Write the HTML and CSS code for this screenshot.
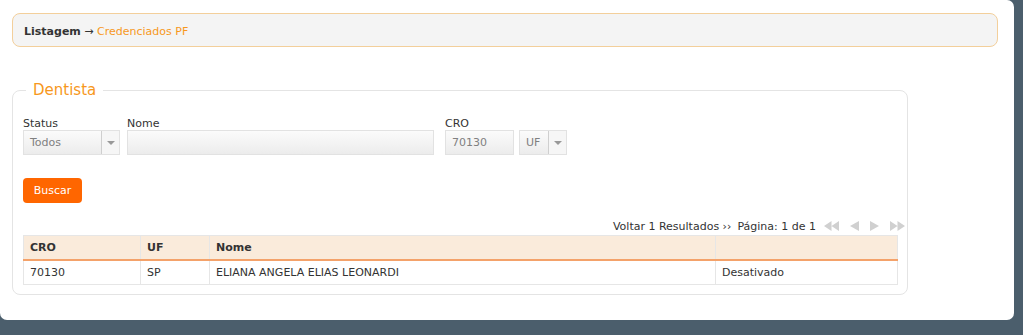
FILE: index.html
```html
<!DOCTYPE html>
<html>
<head>
    <title>Credenciados PF</title>
    <link rel="stylesheet" href="styles.css">
</head>
<body>
    <div class="panel">
        <div class="breadcrumb">
            <strong>Listagem</strong> &rarr; <span class="crumb-current">Credenciados PF</span>
        </div>

        <fieldset class="search-box">
            <legend>Dentista</legend>

            <div class="form-row">
                <div class="field field-status">
                    <label for="status">Status</label>
                    <div class="fake-select">
                        <span class="fake-select-value">Todos</span>
                        <span class="fake-select-arrow"></span>
                    </div>
                </div>
                <div class="field field-nome">
                    <label for="nome">Nome</label>
                    <input type="text" id="nome" class="text-input">
                </div>
                <div class="field field-cro">
                    <label for="cro">CRO</label>
                    <input type="text" id="cro" class="text-input" value="70130">
                </div>
                <div class="field field-uf">
                    <label>&nbsp;</label>
                    <div class="fake-select">
                        <span class="fake-select-value">UF</span>
                        <span class="fake-select-arrow"></span>
                    </div>
                </div>
            </div>

            <button type="button" class="btn-buscar">Buscar</button>

            <div class="pager">
                <span>Voltar 1 Resultados &rsaquo;&rsaquo;</span>
                <span class="pager-page">Página: 1 de 1</span>
                <span class="pager-icons">
                    <svg width="15" height="10" viewBox="0 0 15 10"><path d="M7.5 0 L0 5 L7.5 10 Z M15 0 L7.5 5 L15 10 Z" fill="#d0d0d0"/></svg>
                    <svg width="9" height="10" viewBox="0 0 9 10"><path d="M9 0 L0 5 L9 10 Z" fill="#d0d0d0"/></svg>
                    <svg width="9" height="10" viewBox="0 0 9 10"><path d="M0 0 L9 5 L0 10 Z" fill="#d0d0d0"/></svg>
                    <svg width="15" height="10" viewBox="0 0 15 10"><path d="M0 0 L7.5 5 L0 10 Z M7.5 0 L15 5 L7.5 10 Z" fill="#d0d0d0"/></svg>
                </span>
            </div>

            <table class="results">
                <thead>
                    <tr>
                        <th class="col-cro">CRO</th>
                        <th class="col-uf">UF</th>
                        <th class="col-nome">Nome</th>
                        <th></th>
                    </tr>
                </thead>
                <tbody>
                    <tr>
                        <td>70130</td>
                        <td>SP</td>
                        <td>ELIANA ANGELA ELIAS LEONARDI</td>
                        <td>Desativado</td>
                    </tr>
                </tbody>
            </table>
        </fieldset>
    </div>
</body>
</html>
```

FILE: styles.css
```css
body {
    margin: 0;
    background-color: #4b5e6c;
    font-family: "DejaVu Sans", Verdana, sans-serif;
    font-size: 11px;
    color: #333;
}
.panel {
    width: 1014px;
    height: 320px;
    box-sizing: border-box;
    background-color: #fff;
    border-radius: 0 7px 7px 7px;
    padding: 13px 16px 0 12px;
}
.breadcrumb {
    height: 34px;
    box-sizing: border-box;
    border: 1px solid #f3cf9b;
    border-radius: 8px;
    background-color: #f4f4f4;
    padding: 11px 11px 0;
    color: #333;
}
.crumb-current {
    color: #f7981d;
}
.search-box {
    margin: 34px 0 0;
    width: 896px;
    box-sizing: border-box;
    border: 1px solid #e4e4e4;
    border-radius: 8px;
    padding: 18px 9px 9px 10px;
}
.search-box legend {
    color: #f7981d;
    font-size: 15px;
    padding: 0 7px;
    margin-left: 3px;
}
.form-row {
    display: flex;
}
.field label {
    display: block;
    height: 13px;
    line-height: 13px;
}
.field-status {
    width: 97px;
    margin-right: 7px;
}
.field-nome {
    width: 307px;
    margin-right: 11px;
}
.field-cro {
    width: 69px;
    margin-right: 5px;
}
.field-uf {
    width: 48px;
}
.text-input, .fake-select {
    display: block;
    width: 100%;
    height: 25px;
    box-sizing: border-box;
    border: 1px solid #e2e2e2;
    background: linear-gradient(#fbfbfb, #ececec);
    font-family: inherit;
    font-size: 11px;
    color: #808080;
    padding: 0 6px;
    margin: 0;
}
.fake-select {
    display: flex;
    padding: 0;
}
.fake-select-value {
    flex: 1;
    line-height: 23px;
    padding-left: 6px;
}
.fake-select-arrow {
    width: 17px;
    border-left: 1px solid #cfcfcf;
    background-color: #f6f6f6;
    position: relative;
}
.fake-select-arrow::after {
    content: "";
    position: absolute;
    left: 5px;
    top: 10px;
    border-left: 4px solid transparent;
    border-right: 4px solid transparent;
    border-top: 4px solid #999;
}
.btn-buscar {
    display: block;
    margin-top: 23px;
    width: 59px;
    height: 25px;
    border: none;
    border-radius: 4px;
    background-color: #ff6600;
    color: #fff;
    font-family: inherit;
    font-size: 11px;
    padding: 0;
    cursor: pointer;
}
.pager {
    display: flex;
    justify-content: flex-end;
    align-items: center;
    height: 16px;
    margin: 15px -7px 1px 0;
}
.pager-page {
    margin-left: 6px;
}
.pager-icons {
    display: flex;
    align-items: center;
    gap: 11px;
    margin-left: 8px;
}
.pager-icons svg {
    display: block;
}
.results {
    width: 100%;
    border-collapse: collapse;
}
.results th, .results td {
    border: 1px solid #e6e6e6;
    text-align: left;
    padding: 0 6px;
    height: 23px;
}
.results th {
    background-color: #faebdb;
    border-bottom: 2px solid #f4a26a;
    font-weight: bold;
}
.col-cro {
    width: 104px;
}
.col-uf {
    width: 56px;
}
.col-nome {
    width: 493px;
}
```
